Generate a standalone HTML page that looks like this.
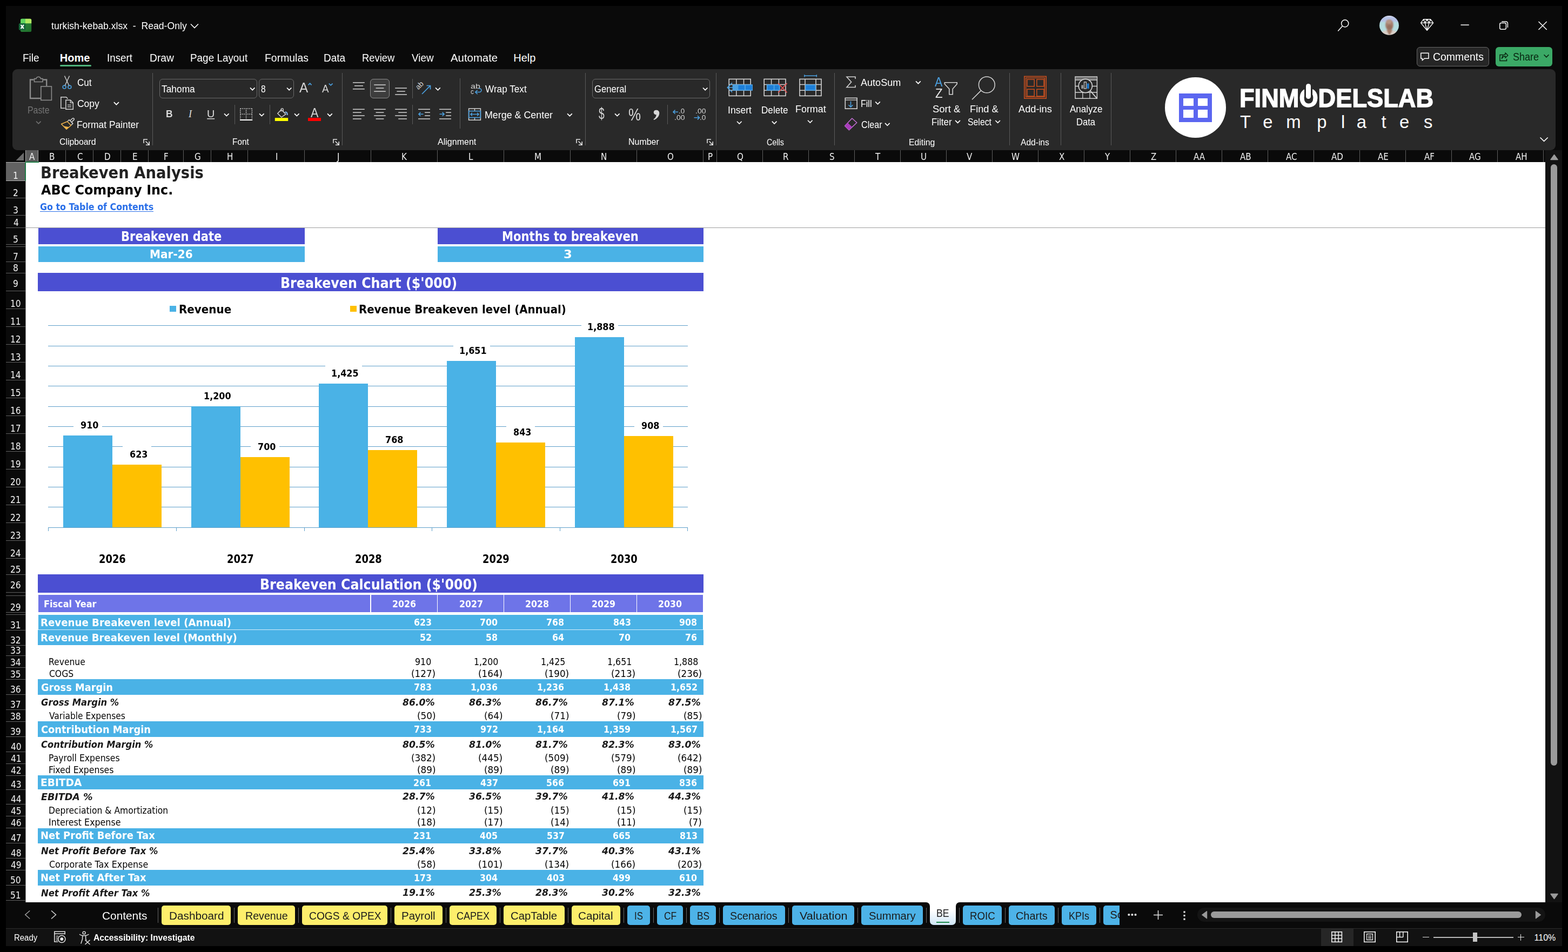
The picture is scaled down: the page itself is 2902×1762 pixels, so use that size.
<!DOCTYPE html>
<html lang="en"><head><meta charset="utf-8"><title>turkish-kebab.xlsx - Excel</title>
<style>
html,body{margin:0;padding:0;background:#000}
body{width:2902px;height:1762px;position:relative;overflow:hidden;font-family:"Liberation Sans",sans-serif}
#app div,#app span,#app svg,#app a,#app b,#app i{position:absolute;box-sizing:border-box}
#app{position:absolute;left:0;top:0;width:2902px;height:1762px;overflow:hidden}
.t{white-space:pre;transform-origin:0 0;color:#fff;text-decoration:none;font-style:normal;font-weight:400}
.f0{font:400 18px "Liberation Sans", sans-serif;line-height:1}
.f1{font:400 20px "Liberation Sans", sans-serif;line-height:1}
.f2{font:700 20px "Liberation Sans", sans-serif;line-height:1}
.f3{font:400 25.5px "Liberation Sans", sans-serif;line-height:1}
.f4{font:700 18.5px "Liberation Sans", sans-serif;line-height:1}
.f5{font:italic 400 18.5px "Liberation Serif", serif;line-height:1}
.f6{font:400 18.5px "Liberation Sans", sans-serif;line-height:1}
.f7{font:400 23px "Liberation Sans", sans-serif;line-height:1}
.f8{font:400 29.5px "Liberation Sans", sans-serif;line-height:1}
.f9{font:400 30.5px "Liberation Sans", sans-serif;line-height:1}
.f10{font:400 24px "Liberation Sans", sans-serif;line-height:1}
.f11{font:400 13.5px "Liberation Sans", sans-serif;line-height:1}
.f12{font:400 12.3px "Liberation Sans", sans-serif;line-height:1}
.f13{font:400 16.5px "Liberation Sans", sans-serif;line-height:1}
.f14{font:700 48.4px "Liberation Sans", sans-serif;line-height:1}
.f15{font:400 16.8px "DejaVu Sans", "Liberation Sans", sans-serif;line-height:1}
.f16{font:400 17.2px "DejaVu Sans", "Liberation Sans", sans-serif;line-height:1}
.f17{font:700 30.8px "DejaVu Sans", "Liberation Sans", sans-serif;line-height:1}
.f18{font:700 24.2px "DejaVu Sans", "Liberation Sans", sans-serif;line-height:1}
.f19{font:700 17.6px "DejaVu Sans", "Liberation Sans", sans-serif;line-height:1}
.f20{font:700 21px "DejaVu Sans", "Liberation Sans", sans-serif;line-height:1}
.f21{font:700 26.4px "DejaVu Sans", "Liberation Sans", sans-serif;line-height:1}
.f22{font:700 22px "DejaVu Sans", "Liberation Sans", sans-serif;line-height:1}
.f23{font:700 16.8px "DejaVu Sans", "Liberation Sans", sans-serif;line-height:1}
.f24{font:700 20.6px "DejaVu Sans", "Liberation Sans", sans-serif;line-height:1}
.f25{font:700 18px "DejaVu Sans", "Liberation Sans", sans-serif;line-height:1}
.f26{font:700 19.8px "DejaVu Sans", "Liberation Sans", sans-serif;line-height:1}
.f27{font:400 17.6px "DejaVu Sans", "Liberation Sans", sans-serif;line-height:1}
.f28{font:italic 700 17.6px "DejaVu Sans", "Liberation Sans", sans-serif;line-height:1}
.f29{font:400 16px "Liberation Sans", sans-serif;line-height:1}
.f30{font:700 16px "Liberation Sans", sans-serif;line-height:1}

</style></head><body><div id="app">
<div style="left:11px;top:11px;width:2879.5px;height:1740px;background:#0a0a0a;"></div>
<span class="t f0" style="left:95.4px;top:39px;transform:scaleX(0.979);">turkish-kebab.xlsx  -  Read-Only</span>
<span class="t f1" style="left:41.65px;top:96.8px;transform:scaleX(0.945);">File</span>
<span class="t f2" style="left:110.8px;top:96.8px;">Home</span>
<span class="t f1" style="left:198.06px;top:96.8px;transform:scaleX(0.94);">Insert</span>
<span class="t f1" style="left:276.54px;top:96.8px;transform:scaleX(0.963);">Draw</span>
<span class="t f1" style="left:352.26px;top:96.8px;transform:scaleX(0.945);">Page Layout</span>
<span class="t f1" style="left:490.23px;top:96.8px;transform:scaleX(0.971);">Formulas</span>
<span class="t f1" style="left:599.35px;top:96.8px;transform:scaleX(0.95);">Data</span>
<span class="t f1" style="left:670.28px;top:96.8px;transform:scaleX(0.921);">Review</span>
<span class="t f1" style="left:762px;top:96.8px;transform:scaleX(0.942);">View</span>
<span class="t f1" style="left:834.2px;top:96.8px;transform:scaleX(1.018);">Automate</span>
<span class="t f1" style="left:950.2px;top:96.8px;">Help</span>
<div style="left:111px;top:120px;width:58px;height:3px;background:#4fb37c;border-radius:1.5px"></div>
<div style="left:2621.5px;top:87px;width:134.5px;height:36px;background:#262626;border:1px solid #666;border-radius:6px"></div>
<span class="t f1" style="left:2652.03px;top:95.4px;transform:scaleX(0.972);">Comments</span>
<div style="left:2768px;top:87px;width:105px;height:36px;background:#3ba966;border-radius:6px"></div>
<span class="t f1" style="left:2799.8px;top:95.4px;color:#08240f;transform:scaleX(0.901);">Share</span>
<div style="left:23px;top:128px;width:2855.5px;height:149.7px;background:#292929;border-radius:9px"></div>
<div style="left:295.2px;top:146.2px;width:180.4px;height:35.5px;background:transparent;border:1px solid #6a6a6a;border-radius:6px"></div>
<div style="left:479px;top:146.2px;width:64.8px;height:35.5px;background:transparent;border:1px solid #6a6a6a;border-radius:6px"></div>
<div style="left:1096.2px;top:146.2px;width:217.6px;height:35.5px;background:transparent;border:1px solid #6a6a6a;border-radius:6px"></div>
<div style="left:685.2px;top:146.2px;width:35.8px;height:35.8px;background:#3d3d3d;border:1px solid #8c8c8c;border-radius:6px"></div>
<div style="left:282px;top:135px;width:1px;height:133.5px;background:#5a5a5a;"></div>
<div style="left:633px;top:135px;width:1px;height:133.5px;background:#5a5a5a;"></div>
<div style="left:1083px;top:135px;width:1px;height:133.5px;background:#5a5a5a;"></div>
<div style="left:1325.1px;top:135px;width:1px;height:133.5px;background:#5a5a5a;"></div>
<div style="left:1544.1px;top:135px;width:1px;height:133.5px;background:#5a5a5a;"></div>
<div style="left:1867.9px;top:135px;width:1px;height:133.5px;background:#5a5a5a;"></div>
<div style="left:1963px;top:135px;width:1px;height:133.5px;background:#5a5a5a;"></div>
<div style="left:2056.1px;top:135px;width:1px;height:133.5px;background:#5a5a5a;"></div>
<div style="left:433.9px;top:194px;width:1px;height:36px;background:#5a5a5a;"></div>
<div style="left:499.1px;top:194px;width:1px;height:36px;background:#5a5a5a;"></div>
<div style="left:762.5px;top:194px;width:1px;height:36px;background:#5a5a5a;"></div>
<div style="left:1234.9px;top:194px;width:1px;height:36px;background:#5a5a5a;"></div>
<div style="left:762.5px;top:146px;width:1px;height:36px;background:#5a5a5a;"></div>
<div style="left:850.8px;top:144.5px;width:1px;height:93px;background:#5a5a5a;"></div>
<span class="t f0" style="left:51.42px;top:195px;color:#737373;transform:scaleX(0.882);">Paste</span>
<span class="t f0" style="left:142.6px;top:143.75px;transform:scaleX(0.943);">Cut</span>
<span class="t f0" style="left:142.6px;top:182.6px;transform:scaleX(0.971);">Copy</span>
<span class="t f0" style="left:142.03px;top:221.9px;transform:scaleX(0.966);">Format Painter</span>
<span class="t f0" style="left:298.8px;top:155.6px;transform:scaleX(0.964);">Tahoma</span>
<span class="t f0" style="left:482.6px;top:155.6px;transform:scaleX(0.86);">8</span>
<span class="t f3" style="left:554.4px;top:150.2px;color:#d4d4d4;transform:scaleX(0.953);">A</span>
<span class="t f1" style="left:595.6px;top:154.2px;color:#d4d4d4;transform:scaleX(0.943);">A</span>
<span class="t f4" style="left:306.56px;top:202px;color:#dcdcdc;transform:scaleX(0.942);">B</span>
<span class="t f5" style="left:349px;top:202px;color:#dcdcdc;">I</span>
<span class="t f6" style="left:383.33px;top:202px;color:#dcdcdc;transform:scaleX(1.073);">U</span>
<span class="t f7" style="left:575px;top:198.3px;color:#d4d4d4;transform:scaleX(0.938);">A</span>
<span class="t f0" style="left:898px;top:155.6px;transform:scaleX(0.954);">Wrap Text</span>
<span class="t f0" style="left:897.01px;top:203.75px;transform:scaleX(0.992);">Merge &amp; Center</span>
<span class="t f0" style="left:1099.6px;top:155.6px;transform:scaleX(0.923);">General</span>
<span class="t f8" style="left:1108px;top:195.4px;color:#d8d8d8;transform:scaleX(0.65);">$</span>
<span class="t f9" style="left:1163.15px;top:196.7px;color:#d8d8d8;transform:scaleX(0.854);">%</span>
<span class="t f0" style="left:1346.93px;top:194.6px;transform:scaleX(0.975);">Insert</span>
<span class="t f0" style="left:1409.25px;top:194.6px;transform:scaleX(0.951);">Delete</span>
<span class="t f0" style="left:1472.01px;top:192.75px;transform:scaleX(0.995);">Format</span>
<span class="t f0" style="left:1593.2px;top:143.75px;transform:scaleX(1.003);">AutoSum</span>
<span class="t f0" style="left:1592.91px;top:182.6px;transform:scaleX(0.891);">Fill</span>
<span class="t f0" style="left:1593.5px;top:221.9px;transform:scaleX(0.895);">Clear</span>
<span class="t f0" style="left:1725.6px;top:192.75px;transform:scaleX(1.026);">Sort &amp;</span>
<span class="t f0" style="left:1724.26px;top:216.5px;transform:scaleX(0.941);">Filter</span>
<span class="t f0" style="left:1794.79px;top:192.75px;transform:scaleX(1.013);">Find &amp;</span>
<span class="t f0" style="left:1791px;top:216.5px;transform:scaleX(0.88);">Select</span>
<span class="t f0" style="left:1885.2px;top:192.75px;transform:scaleX(1.013);">Add-ins</span>
<span class="t f0" style="left:1980.3px;top:192.75px;transform:scaleX(0.946);">Analyze</span>
<span class="t f0" style="left:1992.08px;top:216.5px;transform:scaleX(0.921);">Data</span>
<span class="t f10" style="left:1730px;top:140px;color:#4ba0e0;transform:scaleX(0.9);">A</span>
<span class="t f10" style="left:1730.8px;top:161.2px;color:#e6e6e6;transform:scaleX(0.929);">Z</span>
<span class="t f11" style="left:870.8px;top:152.8px;color:#d4d4d4;transform:scaleX(1.186);">ab</span>
<span class="t f11" style="left:871px;top:163.4px;color:#d4d4d4;transform:scaleX(0.857);">c</span>
<span class="t f12" style="left:1256.22px;top:200.3px;color:#d4d4d4;transform:scaleX(1.083);">.0</span>
<span class="t f12" style="left:1247.86px;top:212.4px;color:#d4d4d4;transform:scaleX(1.138);">.00</span>
<span class="t f12" style="left:1287.16px;top:200.3px;color:#d4d4d4;transform:scaleX(1.144);">.00</span>
<span class="t f12" style="left:1295.4px;top:212.4px;color:#d4d4d4;transform:scaleX(1.104);">.0</span>
<span class="t f13" style="left:109.5px;top:253.6px;transform:scaleX(0.957);">Clipboard</span>
<span class="t f13" style="left:429.77px;top:253.9px;transform:scaleX(0.934);">Font</span>
<span class="t f13" style="left:810.2px;top:253.9px;transform:scaleX(0.972);">Alignment</span>
<span class="t f13" style="left:1162.83px;top:253.9px;transform:scaleX(0.966);">Number</span>
<span class="t f13" style="left:1418.6px;top:254.5px;transform:scaleX(0.868);">Cells</span>
<span class="t f13" style="left:1681.64px;top:254.5px;transform:scaleX(0.958);">Editing</span>
<span class="t f13" style="left:1888.6px;top:254.5px;transform:scaleX(0.944);">Add-ins</span>
<div style="left:2156px;top:142.5px;width:112.6px;height:112.5px;background:#fff;border-radius:50%"></div>
<div style="left:2182px;top:173.2px;width:61px;height:52.6px;background:#5b66f0;"></div>
<div style="left:2190px;top:181.5px;width:19px;height:14.25px;background:#fff;"></div>
<div style="left:2190px;top:203.4px;width:19px;height:14.3px;background:#fff;"></div>
<div style="left:2216.7px;top:181.5px;width:18.6px;height:14.25px;background:#fff;"></div>
<div style="left:2216.7px;top:203.4px;width:18.6px;height:14.3px;background:#fff;"></div>
<span class="t f14" style="left:2293.5px;top:156.6px;transform:scaleX(0.934);-webkit-text-stroke:1.4px #fff;">FINMODELSLAB</span>
<div style="left:2414.2px;top:156px;width:14.6px;height:27.4px;background:#292929;border-radius:7px 7px 0 0"></div>
<div style="left:2416.8px;top:155px;width:9.4px;height:27.8px;background:#fff;border-radius:4.7px"></div>
<svg style="left:2285px;top:200.72px" width="389.46" height="49.2"><text x="10 52.2 95.2 152.2 197 225.7 271.4 305.1 350.1" y="36.08" font-family='"Liberation Sans", sans-serif' font-size="32.8" font-weight="400" fill="#fff">Templates</text></svg>
<svg style="left:0;top:0" width="2902" height="300" viewBox="0 0 2902 300"><defs><linearGradient id="xg" x1="0" y1="0" x2="1" y2="1"><stop offset="0" stop-color="#2f8f3e"/><stop offset="1" stop-color="#1f6e2b"/></linearGradient><radialGradient id="av" cx="0.5" cy="0.55" r="0.6"><stop offset="0" stop-color="#c9a58f"/><stop offset="0.42" stop-color="#b9957f"/><stop offset="0.5" stop-color="#9ec3cf"/><stop offset="1" stop-color="#8fb4cc"/></radialGradient><clipPath id="avc"><circle cx="2571" cy="46.9" r="18"/></clipPath><filter id="bl" x="-20%" y="-20%" width="140%" height="140%"><feGaussianBlur stdDeviation="0.9"/></filter></defs><rect x="38" y="34.8" width="20.2" height="24.2" rx="2.5" fill="url(#xg)"/><path d="M40.5 34.8H47V43.3H38V37.3a2.5 2.5 0 0 1 2.5-2.5Z" fill="#5fd35e"/><path d="M47 34.8H55.7a2.5 2.5 0 0 1 2.5 2.5V43.3H47Z" fill="#b4e862"/><rect x="34.8" y="43" width="12.9" height="12.9" rx="2.6" fill="#17663a"/><path d="M38.6 46L43.9 53M43.9 46L38.6 53" stroke="#fff" stroke-width="2.1" fill="none"/><path d="M353 44.5L360 51.5L367 44.5" fill="none" stroke="#fff" stroke-width="1.6"/><circle cx="2489.2" cy="43.4" r="6.6" fill="none" stroke="#fff" stroke-width="1.5"/><path d="M2484.5 48.2L2476.3 57.4" stroke="#fff" stroke-width="1.5"/><g clip-path="url(#avc)"><g filter="url(#bl)"><rect x="2550" y="26" width="42" height="42" fill="#b4dcdf"/><rect x="2550" y="26" width="42" height="14.5" fill="#b6c2e6"/><rect x="2550" y="26" width="42" height="5" fill="#d9dcef"/><path d="M2553 66C2556 58 2562 56.5 2565.5 56H2577.5C2581 56.5 2586 58 2589 66Z" fill="#d9d0c9"/><path d="M2566 55.5L2571.5 66L2577.5 55.5Z" fill="#a57f6b"/><ellipse cx="2571.4" cy="46.3" rx="7.6" ry="10.6" fill="#a5806f"/><ellipse cx="2570.5" cy="40" rx="5.5" ry="4" fill="#b79786"/><ellipse cx="2572" cy="50.5" rx="5" ry="4.5" fill="#96705f"/></g></g><path d="M2634.5 35.8H2647.7L2652.6 42.4L2641.1 56.3L2629.6 42.4ZM2629.6 42.4H2652.6M2637.3 42.4L2641.1 56.3L2644.9 42.4M2634.5 35.8L2637.3 42.4L2641.1 35.8L2644.9 42.4L2647.7 35.8" fill="none" stroke="#fff" stroke-width="1.4" stroke-linejoin="round"/><path d="M2703.5 46.2H2718.8" stroke="#fff" stroke-width="1.5"/><rect x="2775.8" y="42.6" width="11.6" height="11.6" rx="2.4" fill="none" stroke="#fff" stroke-width="1.5"/><path d="M2779.2 39.9H2787.2a3.2 3.2 0 0 1 3.2 3.2V51" fill="none" stroke="#fff" stroke-width="1.5"/><path d="M2847.5 40L2862.7 55M2862.7 40L2847.5 55" stroke="#fff" stroke-width="1.5"/><path d="M2629.8 98.2H2644V108.2H2636.2L2632.3 111.8V108.2H2629.8Z" fill="none" stroke="#fff" stroke-width="1.5" stroke-linejoin="round"/><path d="M2782 101.5H2776V112.5H2788.5V109" fill="none" stroke="#08240f" stroke-width="1.5"/><path d="M2779.5 108.5C2780 103.5 2783 100.8 2786 100.8V97.8L2790.8 102.4L2786 107V104C2783.5 104 2781 105.5 2779.5 108.5Z" fill="none" stroke="#08240f" stroke-width="1.4" stroke-linejoin="round"/><path d="M2857.5 101.25L2862 105.75L2866.5 101.25" fill="none" stroke="#08240f" stroke-width="1.6"/><path d="M2850.5 254.5L2857.6 261.3L2864.7 254.5" fill="none" stroke="#fff" stroke-width="1.6"/><path d="M62.5 147.5H56V182H75" fill="none" stroke="#8c8c8c" stroke-width="2.4"/><path d="M80 147.5H86.2V159" fill="none" stroke="#8c8c8c" stroke-width="2.4"/><path d="M63.5 151.5V145.6H67A4.3 4.3 0 0 1 75.4 145.6H79V151.5Z" fill="none" stroke="#8c8c8c" stroke-width="1.6"/><rect x="75.8" y="160" width="19.6" height="25.4" fill="#292929" stroke="#8c8c8c" stroke-width="1.6"/><path d="M67 224.55L71.3 228.85L75.6 224.55" fill="none" stroke="#707070" stroke-width="1.7"/><path d="M119.5 140.5L128.3 159.5M128.5 140.5L119.7 159.5" stroke="#d4d4d4" stroke-width="1.4" fill="none"/><circle cx="119.2" cy="161" r="3" fill="none" stroke="#4ba0e0" stroke-width="1.6"/><circle cx="128.8" cy="161" r="3" fill="none" stroke="#4ba0e0" stroke-width="1.6"/><path d="M120.5 200.2H112.8V179.8H122.5L125.5 182.8" fill="none" stroke="#d4d4d4" stroke-width="1.5"/><path d="M121.8 202.3V185.3H130.5L135.3 190.2V202.3Z" fill="none" stroke="#d4d4d4" stroke-width="1.5"/><path d="M130.3 185.5V190.4H135.2" fill="none" stroke="#d4d4d4" stroke-width="1.3"/><path d="M125 194.3H132M125 197.6H132" stroke="#d4d4d4" stroke-width="1.3"/><path d="M210.8 189.1L215.4 193.7L220 189.1" fill="none" stroke="#fff" stroke-width="1.7"/><path d="M113.5 229.5L124.5 225L131.5 232L123 239.3Z" fill="none" stroke="#f0b44c" stroke-width="1.5" stroke-linejoin="round"/><path d="M117.5 233.3L127.8 235.2L123 239.3Z" fill="#f0b44c"/><path d="M125.2 224.5L128 221.8L134.8 228.6L132 231.4" fill="none" stroke="#d4d4d4" stroke-width="1.5"/><path d="M129.5 223.5L134 219.2a1.9 1.9 0 0 1 2.7 2.7L132.3 226.3" fill="none" stroke="#d4d4d4" stroke-width="1.5"/><path d="M266 265V258H273" fill="none" stroke="#e0e0e0" stroke-width="1.6"/><path d="M269.5 261.5L276 268M276.2 262V268.2H270" fill="none" stroke="#e0e0e0" stroke-width="1.6"/><path d="M463 162.47L467.25 166.72L471.5 162.47" fill="none" stroke="#fff" stroke-width="1.7"/><path d="M531 162.5L535.2 166.7L539.4 162.5" fill="none" stroke="#fff" stroke-width="1.7"/><path d="M570.6 157.3L573.6 154.3L576.6 157.3" fill="none" stroke="#4ba0e0" stroke-width="1.7"/><path d="M608.8 154.6L612.2 157.9L615.6 154.6" fill="none" stroke="#4ba0e0" stroke-width="1.7"/><path d="M383.2 219.8H397.2" stroke="#dcdcdc" stroke-width="1.5"/><path d="M415 210.35L419.3 214.65L423.6 210.35" fill="none" stroke="#fff" stroke-width="1.7"/><path d="M444.8 201H466.4M444.8 211.2H466.4M444.8 201V221M455.6 201V221M466.4 201V221" fill="none" stroke="#d4d4d4" stroke-width="1.6" stroke-dasharray="1.6 1.7"/><path d="M444 222H467.2" stroke="#fff" stroke-width="2"/><path d="M480 210.35L484.3 214.65L488.6 210.35" fill="none" stroke="#fff" stroke-width="1.7"/><path d="M520.5 203L528.8 211.3L521 217L513.8 210Z" fill="none" stroke="#d4d4d4" stroke-width="1.5" stroke-linejoin="round"/><path d="M520.2 206.5V202.6a2 2 0 0 1 4 0V206" fill="none" stroke="#d4d4d4" stroke-width="1.4"/><path d="M527 208C530 206.5 531.8 208.5 531.8 213" fill="none" stroke="#7fb2e6" stroke-width="2.2"/><rect x="508.8" y="218.2" width="24.4" height="5.8" fill="#ffff00"/><path d="M545 210.35L549.3 214.65L553.6 210.35" fill="none" stroke="#fff" stroke-width="1.7"/><rect x="570" y="218.2" width="24" height="5.8" fill="#ff0000"/><path d="M606 210.3L610.4 214.7L614.8 210.3" fill="none" stroke="#fff" stroke-width="1.7"/><path d="M617 265V258H624" fill="none" stroke="#e0e0e0" stroke-width="1.6"/><path d="M620.5 261.5L627 268M627.2 262V268.2H621" fill="none" stroke="#e0e0e0" stroke-width="1.6"/><path d="M653 152.9H674.8" stroke="#d4d4d4" stroke-width="1.5"/><path d="M656 158.8H672" stroke="#d4d4d4" stroke-width="1.5"/><path d="M653 164.7H674.8" stroke="#d4d4d4" stroke-width="1.5"/><path d="M692.2 157.1H713.8" stroke="#d4d4d4" stroke-width="1.5"/><path d="M695.6 163.1H710.4" stroke="#d4d4d4" stroke-width="1.5"/><path d="M692.2 169.1H713.8" stroke="#d4d4d4" stroke-width="1.5"/><path d="M731.2 163.1H753" stroke="#d4d4d4" stroke-width="1.5"/><path d="M734.4 169.1H749.8" stroke="#d4d4d4" stroke-width="1.5"/><path d="M731.2 175H753" stroke="#d4d4d4" stroke-width="1.5"/><path d="M653 202.3H674.8" stroke="#d4d4d4" stroke-width="1.5"/><path d="M653 208.2H668.8" stroke="#d4d4d4" stroke-width="1.5"/><path d="M653 214.1H674.8" stroke="#d4d4d4" stroke-width="1.5"/><path d="M653 220H668.8" stroke="#d4d4d4" stroke-width="1.5"/><path d="M692.2 202.3H713.8" stroke="#d4d4d4" stroke-width="1.5"/><path d="M695.6 208.2H710.4" stroke="#d4d4d4" stroke-width="1.5"/><path d="M692.2 214.1H713.8" stroke="#d4d4d4" stroke-width="1.5"/><path d="M695.6 220H710.4" stroke="#d4d4d4" stroke-width="1.5"/><path d="M731.2 202.3H753" stroke="#d4d4d4" stroke-width="1.5"/><path d="M737.2 208.2H753" stroke="#d4d4d4" stroke-width="1.5"/><path d="M731.2 214.1H753" stroke="#d4d4d4" stroke-width="1.5"/><path d="M737.2 220H753" stroke="#d4d4d4" stroke-width="1.5"/><path d="M774 202.3H796" stroke="#d4d4d4" stroke-width="1.5"/><path d="M786.2 208.2H796" stroke="#d4d4d4" stroke-width="1.5"/><path d="M786.2 214.1H796" stroke="#d4d4d4" stroke-width="1.5"/><path d="M774 220H796" stroke="#d4d4d4" stroke-width="1.5"/><path d="M783.5 211.2H775M778.4 207.7L774.9 211.2L778.4 214.7" fill="none" stroke="#4ba0e0" stroke-width="1.6"/><path d="M813 202.3H835" stroke="#d4d4d4" stroke-width="1.5"/><path d="M825.2 208.2H835" stroke="#d4d4d4" stroke-width="1.5"/><path d="M825.2 214.1H835" stroke="#d4d4d4" stroke-width="1.5"/><path d="M813 220H835" stroke="#d4d4d4" stroke-width="1.5"/><path d="M813.5 211.2H822M818.6 207.7L822.1 211.2L818.6 214.7" fill="none" stroke="#4ba0e0" stroke-width="1.6"/><path d="M781 174L796.3 158.7M789.5 158.5H796.5V165.5" fill="none" stroke="#4ba0e0" stroke-width="1.7"/><text x="774.2" y="166.6" font-family="Liberation Sans, sans-serif" font-size="13.5" fill="#d4d4d4" transform="rotate(-45 774.2 166.6)">ab</text><path d="M806 162.4L810.4 166.8L814.8 162.4" fill="none" stroke="#fff" stroke-width="1.7"/><path d="M880 170.5H887.5a3.4 3.4 0 0 0 0-6.8H886M883.7 166.7L879.8 170.5L883.7 174.3" fill="none" stroke="#4ba0e0" stroke-width="1.6"/><rect x="867.6" y="201" width="21.8" height="21.2" fill="none" stroke="#d4d4d4" stroke-width="1.5"/><path d="M878.5 201V205.6M878.5 217.5V222.2" stroke="#d4d4d4" stroke-width="1.4"/><rect x="867.6" y="205.6" width="21.8" height="12" fill="none" stroke="#4ba0e0" stroke-width="1.6"/><path d="M871 211.6H886M873.8 208.8L871 211.6L873.8 214.4M883.2 208.8L886 211.6L883.2 214.4" fill="none" stroke="#4ba0e0" stroke-width="1.5"/><path d="M1050 210.3L1054.4 214.7L1058.8 210.3" fill="none" stroke="#fff" stroke-width="1.7"/><path d="M1067 265V258H1074" fill="none" stroke="#e0e0e0" stroke-width="1.6"/><path d="M1070.5 261.5L1077 268M1077.2 262V268.2H1071" fill="none" stroke="#e0e0e0" stroke-width="1.6"/><path d="M1301 162.5L1305.2 166.7L1309.4 162.5" fill="none" stroke="#fff" stroke-width="1.7"/><path d="M1138 210.35L1142.3 214.65L1146.6 210.35" fill="none" stroke="#fff" stroke-width="1.7"/><path d="M1214.5 203.8a4.2 4.2 0 1 0 0.2 8.3C1214.5 216 1212.8 218.8 1209.5 220.5L1210.3 221.9C1216.5 219.5 1220.3 214.5 1220.3 209.2C1220.3 205.8 1217.8 203.8 1214.5 203.8Z" fill="#d8d8d8"/><path d="M1255 207.2H1246M1249.6 203.6L1246 207.2L1249.6 210.8" fill="none" stroke="#4ba0e0" stroke-width="1.6"/><path d="M1284.5 217.8H1294.5M1290.9 214.2L1294.5 217.8L1290.9 221.4" fill="none" stroke="#4ba0e0" stroke-width="1.6"/><path d="M1309 265V258H1316" fill="none" stroke="#e0e0e0" stroke-width="1.6"/><path d="M1312.5 261.5L1319 268M1319.2 262V268.2H1313" fill="none" stroke="#e0e0e0" stroke-width="1.6"/><rect x="1349.2" y="146.4" width="40" height="31" fill="none" stroke="#d4d4d4" stroke-width="1.6"/><path d="M1362.8 146.4V177.4M1376.5 146.4V177.4M1349.2 156.6H1389.2M1349.2 167.3H1389.2" stroke="#d4d4d4" stroke-width="1.5" fill="none"/><rect x="1355.6" y="156.2" width="37.4" height="11.6" fill="#4ba0e0"/><rect x="1366.4" y="157.8" width="11.6" height="8.4" fill="#1e7fd8"/><rect x="1380" y="157.8" width="12" height="8.4" fill="#1e7fd8"/><path d="M1355 153.3L1346.3 162L1355 170.7M1346.6 162H1365" fill="none" stroke="#4ba0e0" stroke-width="1.7"/><rect x="1414.2" y="146.4" width="39.8" height="31" fill="none" stroke="#d4d4d4" stroke-width="1.6"/><path d="M1427.6 146.4V177.4M1441.4 146.4V177.4M1414.2 156.6H1454M1414.2 167.3H1454" stroke="#d4d4d4" stroke-width="1.5" fill="none"/><rect x="1418.8" y="156.2" width="25" height="11.6" fill="#4ba0e0"/><rect x="1420.6" y="157.8" width="11" height="8.4" fill="#1e7fd8"/><rect x="1433.6" y="157.8" width="8" height="8.4" fill="#1e7fd8"/><path d="M1440.2 154.2L1456.6 171.4M1456.6 154.2L1440.2 171.4" stroke="#e35353" stroke-width="1.7"/><rect x="1480" y="146.4" width="40" height="31" fill="none" stroke="#d4d4d4" stroke-width="1.6"/><path d="M1490 146.4V177.4M1510 146.4V177.4M1480 156.6H1520M1480 167.3H1520" stroke="#d4d4d4" stroke-width="1.5" fill="none"/><rect x="1490" y="156.2" width="20" height="11.6" fill="#4ba0e0"/><rect x="1491.7" y="157.8" width="16.6" height="8.4" fill="#1e7fd8"/><path d="M1488.6 140.3H1511.6M1488.9 138.2V142.5M1511.3 138.2V142.5" stroke="#4ba0e0" stroke-width="1.5"/><path d="M1364 224.75L1368.3 229.05L1372.6 224.75" fill="none" stroke="#fff" stroke-width="1.7"/><path d="M1428.8 224.72L1433.15 229.08L1437.5 224.72" fill="none" stroke="#fff" stroke-width="1.7"/><path d="M1495 222.75L1499.3 227.05L1503.6 222.75" fill="none" stroke="#fff" stroke-width="1.7"/><path d="M1583 146V142.2H1567L1575.6 151.8L1567 161.5H1583V157.7" fill="none" stroke="#d4d4d4" stroke-width="1.6"/><path d="M1695 150.3L1699.4 154.7L1703.8 150.3" fill="none" stroke="#fff" stroke-width="1.7"/><rect x="1564.3" y="181.4" width="21.8" height="19.8" fill="none" stroke="#d4d4d4" stroke-width="1.6"/><path d="M1564.3 185H1586" stroke="#d4d4d4" stroke-width="1.3"/><path d="M1574.5 187.5V198M1570.5 194.2L1574.5 198.2L1578.5 194.2" fill="none" stroke="#4ba0e0" stroke-width="1.6"/><path d="M1620.2 188.45L1624.5 192.75L1628.8 188.45" fill="none" stroke="#fff" stroke-width="1.7"/><path d="M1563.6 233L1576.9 219L1585.8 227L1571.4 240.6Z" fill="none" stroke="#c670d6" stroke-width="1.5" stroke-linejoin="round"/><path d="M1563.6 233L1569 227.3L1577.2 235.1L1571.4 240.6Z" fill="#a93cbc"/><path d="M1638 227.95L1642.3 232.25L1646.6 227.95" fill="none" stroke="#fff" stroke-width="1.7"/><path d="M1748.3 152.8H1771.2V155.5L1763.2 164.5V174.8H1756.8V164.5L1748.3 155.5Z" fill="none" stroke="#d4d4d4" stroke-width="1.6" stroke-linejoin="miter"/><path d="M1768 222.95L1772.5 227.45L1777 222.95" fill="none" stroke="#fff" stroke-width="1.7"/><circle cx="1826.3" cy="156.9" r="14.9" fill="none" stroke="#d4d4d4" stroke-width="1.5"/><path d="M1815.6 167.6L1799 184.3" stroke="#d4d4d4" stroke-width="1.6"/><path d="M1842.3 223.02L1846.65 227.38L1851 223.02" fill="none" stroke="#fff" stroke-width="1.7"/><rect x="1895.8" y="141.4" width="40.4" height="40.8" fill="none" stroke="#c9501f" stroke-width="1.6"/><rect x="1898.6" y="144.2" width="34.8" height="35.2" fill="none" stroke="#c9501f" stroke-width="1.4"/><rect x="1901" y="147" width="13.2" height="12.8" fill="none" stroke="#c9501f" stroke-width="1.5"/><rect x="1901" y="165.2" width="13.2" height="12.8" fill="none" stroke="#c9501f" stroke-width="1.5"/><rect x="1918.8" y="147" width="13.2" height="12.8" fill="none" stroke="#c9501f" stroke-width="1.5"/><rect x="1918.8" y="165.2" width="13.2" height="12.8" fill="none" stroke="#c9501f" stroke-width="1.5"/><rect x="1990" y="142" width="40.4" height="40.2" fill="none" stroke="#d4d4d4" stroke-width="1.5"/><rect x="1990.8" y="143" width="38.8" height="4" fill="#6e6e6e"/><path d="M1990 148H2030.4M1990 159.5H2030.4M1990 171H2030.4M2003.8 171V182M2017 171V182" stroke="#d4d4d4" stroke-width="1.3" fill="none"/><circle cx="2008.8" cy="159" r="12.6" fill="#292929" stroke="#d4d4d4" stroke-width="1.6"/><rect x="2001.3" y="157.5" width="3.6" height="6.5" fill="#9a9a9a"/><rect x="2006.5" y="151.8" width="3.8" height="12.2" fill="none" stroke="#d4d4d4" stroke-width="1.2"/><rect x="2011.8" y="154.5" width="3.6" height="9.5" fill="#1e7fd8"/><path d="M2017.8 168L2030 181.8" stroke="#d4d4d4" stroke-width="1.8"/></svg>
<div style="left:47px;top:300px;width:2813px;height:1370px;background:#fff;"></div>
<div style="left:11px;top:278px;width:2849px;height:22px;background:#0a0a0a;"></div>
<svg style="left:28px;top:282px;" width="17" height="16" viewBox="0 0 17 16"><path d="M16 0.5V15H1.5Z" fill="#6b6b6b"/></svg>
<div style="left:47px;top:278px;width:24px;height:22px;background:#5c5c5c;border-left:1px solid #a8a8a8;border-right:1px solid #a8a8a8"></div>
<div style="left:121px;top:278px;width:1px;height:22px;background:#5e5e5e;"></div>
<div style="left:172px;top:278px;width:1px;height:22px;background:#5e5e5e;"></div>
<div style="left:223px;top:278px;width:1px;height:22px;background:#5e5e5e;"></div>
<div style="left:274px;top:278px;width:1px;height:22px;background:#5e5e5e;"></div>
<div style="left:339px;top:278px;width:1px;height:22px;background:#5e5e5e;"></div>
<div style="left:390px;top:278px;width:1px;height:22px;background:#5e5e5e;"></div>
<div style="left:458px;top:278px;width:1px;height:22px;background:#5e5e5e;"></div>
<div style="left:563px;top:278px;width:1px;height:22px;background:#5e5e5e;"></div>
<div style="left:686px;top:278px;width:1px;height:22px;background:#5e5e5e;"></div>
<div style="left:809px;top:278px;width:1px;height:22px;background:#5e5e5e;"></div>
<div style="left:932px;top:278px;width:1px;height:22px;background:#5e5e5e;"></div>
<div style="left:1055px;top:278px;width:1px;height:22px;background:#5e5e5e;"></div>
<div style="left:1178px;top:278px;width:1px;height:22px;background:#5e5e5e;"></div>
<div style="left:1301px;top:278px;width:1px;height:22px;background:#5e5e5e;"></div>
<div style="left:1326px;top:278px;width:1px;height:22px;background:#5e5e5e;"></div>
<div style="left:1411px;top:278px;width:1px;height:22px;background:#5e5e5e;"></div>
<div style="left:1496px;top:278px;width:1px;height:22px;background:#5e5e5e;"></div>
<div style="left:1581px;top:278px;width:1px;height:22px;background:#5e5e5e;"></div>
<div style="left:1666px;top:278px;width:1px;height:22px;background:#5e5e5e;"></div>
<div style="left:1751px;top:278px;width:1px;height:22px;background:#5e5e5e;"></div>
<div style="left:1836px;top:278px;width:1px;height:22px;background:#5e5e5e;"></div>
<div style="left:1921px;top:278px;width:1px;height:22px;background:#5e5e5e;"></div>
<div style="left:2006px;top:278px;width:1px;height:22px;background:#5e5e5e;"></div>
<div style="left:2091px;top:278px;width:1px;height:22px;background:#5e5e5e;"></div>
<div style="left:2176px;top:278px;width:1px;height:22px;background:#5e5e5e;"></div>
<div style="left:2261px;top:278px;width:1px;height:22px;background:#5e5e5e;"></div>
<div style="left:2346px;top:278px;width:1px;height:22px;background:#5e5e5e;"></div>
<div style="left:2431px;top:278px;width:1px;height:22px;background:#5e5e5e;"></div>
<div style="left:2516px;top:278px;width:1px;height:22px;background:#5e5e5e;"></div>
<div style="left:2601px;top:278px;width:1px;height:22px;background:#5e5e5e;"></div>
<div style="left:2686px;top:278px;width:1px;height:22px;background:#5e5e5e;"></div>
<div style="left:2771px;top:278px;width:1px;height:22px;background:#5e5e5e;"></div>
<div style="left:2856px;top:278px;width:1px;height:22px;background:#5e5e5e;"></div>
<span class="t f15" style="left:54.4px;top:281.75px;color:#f2f2f2;transform:scaleX(0.9);">A</span>
<span class="t f15" style="left:91.4px;top:281.75px;color:#f2f2f2;transform:scaleX(0.9);">B</span>
<span class="t f15" style="left:142.85px;top:281.75px;color:#f2f2f2;transform:scaleX(0.9);">C</span>
<span class="t f15" style="left:192.95px;top:281.75px;color:#f2f2f2;transform:scaleX(0.9);">D</span>
<span class="t f15" style="left:244.85px;top:281.75px;color:#f2f2f2;transform:scaleX(0.9);">E</span>
<span class="t f15" style="left:303.3px;top:281.75px;color:#f2f2f2;transform:scaleX(0.9);">F</span>
<span class="t f15" style="left:360.4px;top:281.75px;color:#f2f2f2;transform:scaleX(0.9);">G</span>
<span class="t f15" style="left:419.9px;top:281.75px;color:#f2f2f2;transform:scaleX(0.9);">H</span>
<span class="t f15" style="left:509.55px;top:281.75px;color:#f2f2f2;transform:scaleX(0.9);">I</span>
<span class="t f15" style="left:624.45px;top:281.75px;color:#f2f2f2;transform:scaleX(0.9);">J</span>
<span class="t f15" style="left:742.95px;top:281.75px;color:#f2f2f2;transform:scaleX(0.9);">K</span>
<span class="t f15" style="left:866.85px;top:281.75px;color:#f2f2f2;transform:scaleX(0.9);">L</span>
<span class="t f15" style="left:988.5px;top:281.75px;color:#f2f2f2;transform:scaleX(0.9);">M</span>
<span class="t f15" style="left:1112.4px;top:281.75px;color:#f2f2f2;transform:scaleX(0.9);">N</span>
<span class="t f15" style="left:1234.95px;top:281.75px;color:#f2f2f2;transform:scaleX(0.9);">O</span>
<span class="t f15" style="left:1309.85px;top:281.75px;color:#f2f2f2;transform:scaleX(0.9);">P</span>
<span class="t f15" style="left:1363.95px;top:281.75px;color:#f2f2f2;transform:scaleX(0.9);">Q</span>
<span class="t f15" style="left:1448.95px;top:281.75px;color:#f2f2f2;transform:scaleX(0.9);">R</span>
<span class="t f15" style="left:1534.85px;top:281.75px;color:#f2f2f2;transform:scaleX(0.9);">S</span>
<span class="t f15" style="left:1620.3px;top:281.75px;color:#f2f2f2;transform:scaleX(0.9);">T</span>
<span class="t f15" style="left:1704.4px;top:281.75px;color:#f2f2f2;transform:scaleX(0.9);">U</span>
<span class="t f15" style="left:1789.4px;top:281.75px;color:#f2f2f2;transform:scaleX(0.9);">V</span>
<span class="t f15" style="left:1872.15px;top:281.75px;color:#f2f2f2;transform:scaleX(0.9);">W</span>
<span class="t f15" style="left:1959.85px;top:281.75px;color:#f2f2f2;transform:scaleX(0.9);">X</span>
<span class="t f15" style="left:2045.3px;top:281.75px;color:#f2f2f2;transform:scaleX(0.9);">Y</span>
<span class="t f15" style="left:2129.85px;top:281.75px;color:#f2f2f2;transform:scaleX(0.9);">Z</span>
<span class="t f15" style="left:2209.02px;top:281.75px;color:#f2f2f2;transform:scaleX(0.9);">AA</span>
<span class="t f15" style="left:2294.68px;top:281.75px;color:#f2f2f2;transform:scaleX(0.9);">AB</span>
<span class="t f15" style="left:2379.82px;top:281.75px;color:#f2f2f2;transform:scaleX(0.9);">AC</span>
<span class="t f15" style="left:2464.23px;top:281.75px;color:#f2f2f2;transform:scaleX(0.9);">AD</span>
<span class="t f15" style="left:2550.13px;top:281.75px;color:#f2f2f2;transform:scaleX(0.9);">AE</span>
<span class="t f15" style="left:2635.58px;top:281.75px;color:#f2f2f2;transform:scaleX(0.9);">AF</span>
<span class="t f15" style="left:2719.37px;top:281.75px;color:#f2f2f2;transform:scaleX(0.9);">AG</span>
<span class="t f15" style="left:2804.68px;top:281.75px;color:#f2f2f2;transform:scaleX(0.9);">AH</span>
<div style="left:47px;top:299px;width:25px;height:2px;background:#1f7a45;"></div>
<div style="left:11px;top:300px;width:36px;height:1370px;background:#0a0a0a;"></div>
<div style="left:47px;top:300px;width:1px;height:1370px;background:#8e8e8e;"></div>
<div style="left:11px;top:300px;width:37px;height:35px;background:#626262;border-right:2px solid #1f7a45;border-top:1px solid #b0b0b0;border-bottom:1px solid #b0b0b0"></div>
<span class="t f16" style="left:24.35px;top:316.8px;color:#f2f2f2;transform:scaleX(0.9);">1</span>
<div style="left:11px;top:365.5px;width:36px;height:1px;background:#5e5e5e;"></div>
<span class="t f16" style="left:24.35px;top:348.6px;color:#f2f2f2;transform:scaleX(0.9);">2</span>
<div style="left:11px;top:397.5px;width:36px;height:1px;background:#5e5e5e;"></div>
<span class="t f16" style="left:24.35px;top:380.6px;color:#f2f2f2;transform:scaleX(0.9);">3</span>
<div style="left:11px;top:420.5px;width:36px;height:1px;background:#5e5e5e;"></div>
<span class="t f16" style="left:24.8px;top:403.6px;color:#f2f2f2;transform:scaleX(0.9);">4</span>
<div style="left:11px;top:451.5px;width:36px;height:1px;background:#5e5e5e;"></div>
<span class="t f16" style="left:24.35px;top:434.6px;color:#f2f2f2;transform:scaleX(0.9);">5</span>
<div style="left:11px;top:484px;width:36px;height:1px;background:#5e5e5e;"></div>
<div style="left:11px;top:455.5px;width:36px;height:1px;background:#5e5e5e;"></div>
<span class="t f16" style="left:24.35px;top:466.6px;color:#f2f2f2;transform:scaleX(0.9);">7</span>
<div style="left:11px;top:505px;width:36px;height:1px;background:#5e5e5e;"></div>
<span class="t f16" style="left:24.35px;top:488.1px;color:#f2f2f2;transform:scaleX(0.9);">8</span>
<div style="left:11px;top:538.25px;width:36px;height:1px;background:#5e5e5e;"></div>
<span class="t f16" style="left:24.35px;top:517.3px;color:#f2f2f2;transform:scaleX(0.9);">9</span>
<div style="left:11px;top:571.22px;width:36px;height:1px;background:#5e5e5e;"></div>
<span class="t f16" style="left:19.43px;top:554.32px;color:#f2f2f2;transform:scaleX(0.9);">10</span>
<div style="left:11px;top:604.19px;width:36px;height:1px;background:#5e5e5e;"></div>
<span class="t f16" style="left:19.43px;top:587.29px;color:#f2f2f2;transform:scaleX(0.9);">11</span>
<div style="left:11px;top:637.16px;width:36px;height:1px;background:#5e5e5e;"></div>
<span class="t f16" style="left:19.43px;top:620.26px;color:#f2f2f2;transform:scaleX(0.9);">12</span>
<div style="left:11px;top:670.13px;width:36px;height:1px;background:#5e5e5e;"></div>
<span class="t f16" style="left:19.43px;top:653.23px;color:#f2f2f2;transform:scaleX(0.9);">13</span>
<div style="left:11px;top:703.1px;width:36px;height:1px;background:#5e5e5e;"></div>
<span class="t f16" style="left:19.43px;top:686.2px;color:#f2f2f2;transform:scaleX(0.9);">14</span>
<div style="left:11px;top:736.07px;width:36px;height:1px;background:#5e5e5e;"></div>
<span class="t f16" style="left:19.43px;top:719.17px;color:#f2f2f2;transform:scaleX(0.9);">15</span>
<div style="left:11px;top:769.04px;width:36px;height:1px;background:#5e5e5e;"></div>
<span class="t f16" style="left:19.43px;top:752.14px;color:#f2f2f2;transform:scaleX(0.9);">16</span>
<div style="left:11px;top:802.01px;width:36px;height:1px;background:#5e5e5e;"></div>
<span class="t f16" style="left:19.43px;top:785.11px;color:#f2f2f2;transform:scaleX(0.9);">17</span>
<div style="left:11px;top:834.98px;width:36px;height:1px;background:#5e5e5e;"></div>
<span class="t f16" style="left:19.43px;top:818.08px;color:#f2f2f2;transform:scaleX(0.9);">18</span>
<div style="left:11px;top:867.95px;width:36px;height:1px;background:#5e5e5e;"></div>
<span class="t f16" style="left:19.43px;top:851.05px;color:#f2f2f2;transform:scaleX(0.9);">19</span>
<div style="left:11px;top:900.92px;width:36px;height:1px;background:#5e5e5e;"></div>
<span class="t f16" style="left:19.43px;top:884.02px;color:#f2f2f2;transform:scaleX(0.9);">20</span>
<div style="left:11px;top:933.89px;width:36px;height:1px;background:#5e5e5e;"></div>
<span class="t f16" style="left:19.43px;top:916.99px;color:#f2f2f2;transform:scaleX(0.9);">21</span>
<div style="left:11px;top:966.86px;width:36px;height:1px;background:#5e5e5e;"></div>
<span class="t f16" style="left:19.43px;top:949.96px;color:#f2f2f2;transform:scaleX(0.9);">22</span>
<div style="left:11px;top:999.83px;width:36px;height:1px;background:#5e5e5e;"></div>
<span class="t f16" style="left:19.43px;top:982.93px;color:#f2f2f2;transform:scaleX(0.9);">23</span>
<div style="left:11px;top:1032.8px;width:36px;height:1px;background:#5e5e5e;"></div>
<span class="t f16" style="left:19.43px;top:1015.9px;color:#f2f2f2;transform:scaleX(0.9);">24</span>
<div style="left:11px;top:1063px;width:36px;height:1px;background:#5e5e5e;"></div>
<span class="t f16" style="left:19.43px;top:1046.1px;color:#f2f2f2;transform:scaleX(0.9);">25</span>
<div style="left:11px;top:1096.3px;width:36px;height:1px;background:#5e5e5e;"></div>
<span class="t f16" style="left:19.43px;top:1075.4px;color:#f2f2f2;transform:scaleX(0.9);">26</span>
<div style="left:11px;top:1132.7px;width:36px;height:1px;background:#5e5e5e;"></div>
<div style="left:11px;top:1101.5px;width:36px;height:1px;background:#5e5e5e;"></div>
<span class="t f16" style="left:19.43px;top:1115.8px;color:#f2f2f2;transform:scaleX(0.9);">29</span>
<div style="left:11px;top:1165.5px;width:36px;height:1px;background:#5e5e5e;"></div>
<div style="left:11px;top:1136.7px;width:36px;height:1px;background:#5e5e5e;"></div>
<span class="t f16" style="left:19.43px;top:1148.6px;color:#f2f2f2;transform:scaleX(0.9);">31</span>
<div style="left:11px;top:1193.5px;width:36px;height:1px;background:#5e5e5e;"></div>
<span class="t f16" style="left:19.43px;top:1176.6px;color:#f2f2f2;transform:scaleX(0.9);">32</span>
<div style="left:11px;top:1212.5px;width:36px;height:1px;background:#5e5e5e;"></div>
<span class="t f16" style="left:19.43px;top:1195.6px;color:#f2f2f2;transform:scaleX(0.9);">33</span>
<div style="left:11px;top:1234.5px;width:36px;height:1px;background:#5e5e5e;"></div>
<span class="t f16" style="left:19.43px;top:1217.6px;color:#f2f2f2;transform:scaleX(0.9);">34</span>
<div style="left:11px;top:1256.5px;width:36px;height:1px;background:#5e5e5e;"></div>
<span class="t f16" style="left:19.43px;top:1239.6px;color:#f2f2f2;transform:scaleX(0.9);">35</span>
<div style="left:11px;top:1285px;width:36px;height:1px;background:#5e5e5e;"></div>
<span class="t f16" style="left:19.43px;top:1268.1px;color:#f2f2f2;transform:scaleX(0.9);">36</span>
<div style="left:11px;top:1312.5px;width:36px;height:1px;background:#5e5e5e;"></div>
<span class="t f16" style="left:19.43px;top:1295.6px;color:#f2f2f2;transform:scaleX(0.9);">37</span>
<div style="left:11px;top:1334.5px;width:36px;height:1px;background:#5e5e5e;"></div>
<span class="t f16" style="left:19.43px;top:1317.6px;color:#f2f2f2;transform:scaleX(0.9);">38</span>
<div style="left:11px;top:1363.25px;width:36px;height:1px;background:#5e5e5e;"></div>
<span class="t f16" style="left:19.43px;top:1346.35px;color:#f2f2f2;transform:scaleX(0.9);">39</span>
<div style="left:11px;top:1390.75px;width:36px;height:1px;background:#5e5e5e;"></div>
<span class="t f16" style="left:19.88px;top:1373.85px;color:#f2f2f2;transform:scaleX(0.9);">40</span>
<div style="left:11px;top:1412.5px;width:36px;height:1px;background:#5e5e5e;"></div>
<span class="t f16" style="left:19.88px;top:1395.6px;color:#f2f2f2;transform:scaleX(0.9);">41</span>
<div style="left:11px;top:1434.5px;width:36px;height:1px;background:#5e5e5e;"></div>
<span class="t f16" style="left:19.88px;top:1417.6px;color:#f2f2f2;transform:scaleX(0.9);">42</span>
<div style="left:11px;top:1460.5px;width:36px;height:1px;background:#5e5e5e;"></div>
<span class="t f16" style="left:19.88px;top:1443.6px;color:#f2f2f2;transform:scaleX(0.9);">43</span>
<div style="left:11px;top:1488px;width:36px;height:1px;background:#5e5e5e;"></div>
<span class="t f16" style="left:19.88px;top:1471.1px;color:#f2f2f2;transform:scaleX(0.9);">44</span>
<div style="left:11px;top:1510px;width:36px;height:1px;background:#5e5e5e;"></div>
<span class="t f16" style="left:19.88px;top:1493.1px;color:#f2f2f2;transform:scaleX(0.9);">45</span>
<div style="left:11px;top:1532px;width:36px;height:1px;background:#5e5e5e;"></div>
<span class="t f16" style="left:19.88px;top:1515.1px;color:#f2f2f2;transform:scaleX(0.9);">46</span>
<div style="left:11px;top:1560px;width:36px;height:1px;background:#5e5e5e;"></div>
<span class="t f16" style="left:19.88px;top:1543.1px;color:#f2f2f2;transform:scaleX(0.9);">47</span>
<div style="left:11px;top:1587.5px;width:36px;height:1px;background:#5e5e5e;"></div>
<span class="t f16" style="left:19.88px;top:1570.6px;color:#f2f2f2;transform:scaleX(0.9);">48</span>
<div style="left:11px;top:1609.5px;width:36px;height:1px;background:#5e5e5e;"></div>
<span class="t f16" style="left:19.88px;top:1592.6px;color:#f2f2f2;transform:scaleX(0.9);">49</span>
<div style="left:11px;top:1638px;width:36px;height:1px;background:#5e5e5e;"></div>
<span class="t f16" style="left:19.43px;top:1621.1px;color:#f2f2f2;transform:scaleX(0.9);">50</span>
<div style="left:11px;top:1665.5px;width:36px;height:1px;background:#5e5e5e;"></div>
<span class="t f16" style="left:19.43px;top:1648.6px;color:#f2f2f2;transform:scaleX(0.9);">51</span>
<div style="left:47px;top:420.6px;width:2813px;height:1.1px;background:#9c9c9c;"></div>
<span class="t f17" style="left:75.22px;top:303.6px;color:#222;transform:scaleX(0.891);">Breakeven Analysis</span>
<span class="t f18" style="left:76px;top:340px;color:#000;transform:scaleX(0.986);">ABC Company Inc.</span>
<a class="t f19" style="left:74.3px;top:374.75px;color:#2a6fe8;transform:scaleX(0.903);">Go to Table of Contents</a>
<div style="left:74.3px;top:390.6px;width:209.7px;height:1.7px;background:#2a6fe8;"></div>
<div style="left:71px;top:422px;width:493px;height:30px;background:#4b4fd2;"></div>
<span class="t f18" style="left:224.01px;top:426px;transform:scaleX(0.869);">Breakeven date</span>
<div style="left:71px;top:456px;width:493px;height:28.5px;background:#4ab2e6;"></div>
<span class="t f20" style="left:277.29px;top:460.5px;transform:scaleX(0.957);">Mar-26</span>
<div style="left:810px;top:422px;width:492px;height:30px;background:#4b4fd2;"></div>
<span class="t f18" style="left:928.75px;top:426px;transform:scaleX(0.874);">Months to breakeven</span>
<div style="left:810px;top:456px;width:492px;height:28.5px;background:#4ab2e6;"></div>
<span class="t f20" style="left:1043.42px;top:460.5px;transform:scaleX(1.083);">3</span>
<div style="left:70px;top:505px;width:1232px;height:34px;background:#4b4fd2;"></div>
<span class="t f21" style="left:519.2px;top:510.5px;transform:scaleX(0.901);">Breakeven Chart ($&#x27;000)</span>
<div style="left:89px;top:938px;width:1184px;height:1px;background:#5e9fca;"></div>
<div style="left:89px;top:901px;width:1184px;height:1px;background:#5e9fca;"></div>
<div style="left:89px;top:864px;width:1184px;height:1px;background:#5e9fca;"></div>
<div style="left:89px;top:826px;width:1184px;height:1px;background:#5e9fca;"></div>
<div style="left:89px;top:789px;width:1184px;height:1px;background:#5e9fca;"></div>
<div style="left:89px;top:752px;width:1184px;height:1px;background:#5e9fca;"></div>
<div style="left:89px;top:714px;width:1184px;height:1px;background:#5e9fca;"></div>
<div style="left:89px;top:677px;width:1184px;height:1px;background:#5e9fca;"></div>
<div style="left:89px;top:640px;width:1184px;height:1px;background:#5e9fca;"></div>
<div style="left:89px;top:602px;width:1184px;height:1px;background:#5e9fca;"></div>
<div style="left:314.25px;top:565.5px;width:11.5px;height:11.5px;background:#4ab2e6;"></div>
<span class="t f22" style="left:330.69px;top:562.4px;color:#000;transform:scaleX(0.905);">Revenue</span>
<div style="left:648px;top:565.5px;width:12px;height:11.5px;background:#ffc000;"></div>
<span class="t f22" style="left:663.7px;top:562.4px;color:#000;transform:scaleX(0.898);">Revenue Breakeven level (Annual)</span>
<div style="left:136px;top:771px;width:53px;height:26.5px;background:#fff;"></div>
<span class="t f23" style="left:149.11px;top:779px;color:#000;transform:scaleX(0.954);">910</span>
<div style="left:227px;top:825px;width:53px;height:26.5px;background:#fff;"></div>
<span class="t f23" style="left:239.64px;top:833px;color:#000;transform:scaleX(0.954);">623</span>
<div style="left:117px;top:806px;width:91px;height:170.25px;background:#4ab2e6;"></div>
<div style="left:208px;top:860px;width:91px;height:116.25px;background:#ffc000;"></div>
<span class="t f24" style="left:183.02px;top:1025px;color:#000;transform:scaleX(0.868);">2026</span>
<div style="left:365.5px;top:717px;width:68px;height:26.5px;background:#fff;"></div>
<span class="t f23" style="left:377.03px;top:725px;color:#000;transform:scaleX(0.954);">1,200</span>
<div style="left:464px;top:811px;width:53px;height:26.5px;background:#fff;"></div>
<span class="t f23" style="left:476.64px;top:819px;color:#000;transform:scaleX(0.954);">700</span>
<div style="left:354px;top:752px;width:91px;height:224.25px;background:#4ab2e6;"></div>
<div style="left:445px;top:846px;width:91px;height:130.25px;background:#ffc000;"></div>
<span class="t f24" style="left:420.25px;top:1025px;color:#000;transform:scaleX(0.868);">2027</span>
<div style="left:601.5px;top:675px;width:68px;height:26.5px;background:#fff;"></div>
<span class="t f23" style="left:613.03px;top:683px;color:#000;transform:scaleX(0.954);">1,425</span>
<div style="left:700px;top:798px;width:53px;height:26.5px;background:#fff;"></div>
<span class="t f23" style="left:712.64px;top:806px;color:#000;transform:scaleX(0.954);">768</span>
<div style="left:590px;top:710px;width:91px;height:266.25px;background:#4ab2e6;"></div>
<div style="left:681px;top:833px;width:91px;height:143.25px;background:#ffc000;"></div>
<span class="t f24" style="left:656.62px;top:1025px;color:#000;transform:scaleX(0.868);">2028</span>
<div style="left:838.5px;top:633px;width:68px;height:26.5px;background:#fff;"></div>
<span class="t f23" style="left:850.03px;top:641px;color:#000;transform:scaleX(0.954);">1,651</span>
<div style="left:937px;top:784px;width:53px;height:26.5px;background:#fff;"></div>
<span class="t f23" style="left:949.64px;top:792px;color:#000;transform:scaleX(0.954);">843</span>
<div style="left:827px;top:668px;width:91px;height:308.25px;background:#4ab2e6;"></div>
<div style="left:918px;top:819px;width:91px;height:157.25px;background:#ffc000;"></div>
<span class="t f24" style="left:893.42px;top:1025px;color:#000;transform:scaleX(0.868);">2029</span>
<div style="left:1075.5px;top:589px;width:68px;height:26.5px;background:#fff;"></div>
<span class="t f23" style="left:1087.03px;top:597px;color:#000;transform:scaleX(0.954);">1,888</span>
<div style="left:1174px;top:772px;width:53px;height:26.5px;background:#fff;"></div>
<span class="t f23" style="left:1187.11px;top:780px;color:#000;transform:scaleX(0.954);">908</span>
<div style="left:1064px;top:624px;width:91px;height:352.25px;background:#4ab2e6;"></div>
<div style="left:1155px;top:807px;width:91px;height:169.25px;background:#ffc000;"></div>
<span class="t f24" style="left:1130.22px;top:1025px;color:#000;transform:scaleX(0.868);">2030</span>
<div style="left:89px;top:976px;width:1184px;height:1px;background:#5e9fca;"></div>
<div style="left:89px;top:976px;width:1px;height:6.5px;background:#5e9fca;"></div>
<div style="left:326px;top:976px;width:1px;height:6.5px;background:#5e9fca;"></div>
<div style="left:563px;top:976px;width:1px;height:6.5px;background:#5e9fca;"></div>
<div style="left:799px;top:976px;width:1px;height:6.5px;background:#5e9fca;"></div>
<div style="left:1036px;top:976px;width:1px;height:6.5px;background:#5e9fca;"></div>
<div style="left:1272px;top:976px;width:1px;height:6.5px;background:#5e9fca;"></div>
<div style="left:70px;top:1063px;width:1232px;height:34px;background:#4b4fd2;"></div>
<span class="t f21" style="left:481.2px;top:1068.5px;transform:scaleX(0.9);">Breakeven Calculation ($&#x27;000)</span>
<div style="left:71px;top:1101px;width:1230px;height:32px;background:#6e74e8;"></div>
<div style="left:685.25px;top:1101px;width:1.5px;height:32px;background:#fff;"></div>
<div style="left:808.75px;top:1101px;width:1.5px;height:32px;background:#fff;"></div>
<div style="left:931.75px;top:1101px;width:1.5px;height:32px;background:#fff;"></div>
<div style="left:1054.75px;top:1101px;width:1.5px;height:32px;background:#fff;"></div>
<div style="left:1177.75px;top:1101px;width:1.5px;height:32px;background:#fff;"></div>
<span class="t f25" style="left:81.11px;top:1109.2px;transform:scaleX(0.894);">Fiscal Year</span>
<span class="t f19" style="left:725.87px;top:1110px;transform:scaleX(0.9);">2026</span>
<span class="t f19" style="left:849.57px;top:1110px;transform:scaleX(0.9);">2027</span>
<span class="t f19" style="left:972.12px;top:1110px;transform:scaleX(0.9);">2028</span>
<span class="t f19" style="left:1095.12px;top:1110px;transform:scaleX(0.9);">2029</span>
<span class="t f19" style="left:1217.87px;top:1110px;transform:scaleX(0.9);">2030</span>
<div style="left:71.2px;top:1138.25px;width:1229.8px;height:26.35px;background:#4ab2e6;"></div>
<span class="t f26" style="left:74.68px;top:1142.8px;transform:scaleX(0.919);">Revenue Breakeven level (Annual)</span>
<span class="t f19" style="left:765.66px;top:1144.1px;transform:scaleX(0.9);">623</span>
<span class="t f19" style="left:888.36px;top:1144.1px;transform:scaleX(0.9);">700</span>
<span class="t f19" style="left:1011.46px;top:1144.1px;transform:scaleX(0.9);">768</span>
<span class="t f19" style="left:1135.26px;top:1144.1px;transform:scaleX(0.9);">843</span>
<span class="t f19" style="left:1257.36px;top:1144.1px;transform:scaleX(0.9);">908</span>
<div style="left:70px;top:1164.6px;width:1232px;height:1.6px;background:#d6effb;"></div>
<div style="left:70px;top:1166.2px;width:1232px;height:27.55px;background:#4ab2e6;"></div>
<span class="t f26" style="left:74.68px;top:1170.9px;transform:scaleX(0.916);">Revenue Breakeven level (Monthly)</span>
<span class="t f19" style="left:776.68px;top:1172.2px;transform:scaleX(0.9);">52</span>
<span class="t f19" style="left:899.38px;top:1172.2px;transform:scaleX(0.9);">58</span>
<span class="t f19" style="left:1022.48px;top:1172.2px;transform:scaleX(0.9);">64</span>
<span class="t f19" style="left:1145.38px;top:1172.2px;transform:scaleX(0.9);">70</span>
<span class="t f19" style="left:1268.38px;top:1172.2px;transform:scaleX(0.9);">76</span>
<span class="t f27" style="left:90.41px;top:1217.25px;color:#000;transform:scaleX(0.885);">Revenue</span>
<span class="t f27" style="left:768.25px;top:1217.25px;color:#000;transform:scaleX(0.9);">910</span>
<span class="t f27" style="left:876.74px;top:1217.25px;color:#000;transform:scaleX(0.9);">1,200</span>
<span class="t f27" style="left:1000.74px;top:1217.25px;color:#000;transform:scaleX(0.9);">1,425</span>
<span class="t f27" style="left:1123.64px;top:1217.25px;color:#000;transform:scaleX(0.9);">1,651</span>
<span class="t f27" style="left:1246.64px;top:1217.25px;color:#000;transform:scaleX(0.9);">1,888</span>
<span class="t f27" style="left:91.3px;top:1238.5px;color:#000;transform:scaleX(0.885);">COGS</span>
<span class="t f27" style="left:761.29px;top:1238.5px;color:#000;transform:scaleX(0.954);">(127)</span>
<span class="t f27" style="left:884.89px;top:1238.5px;color:#000;transform:scaleX(0.954);">(164)</span>
<span class="t f27" style="left:1007.99px;top:1238.5px;color:#000;transform:scaleX(0.954);">(190)</span>
<span class="t f27" style="left:1130.89px;top:1238.5px;color:#000;transform:scaleX(0.954);">(213)</span>
<span class="t f27" style="left:1253.89px;top:1238.5px;color:#000;transform:scaleX(0.954);">(236)</span>
<div style="left:70px;top:1257px;width:1232px;height:28.75px;background:#4ab2e6;"></div>
<span class="t f26" style="left:75.6px;top:1262.5px;transform:scaleX(0.899);">Gross Margin</span>
<span class="t f19" style="left:765.66px;top:1263.8px;transform:scaleX(0.9);">783</span>
<span class="t f19" style="left:871.33px;top:1263.8px;transform:scaleX(0.9);">1,036</span>
<span class="t f19" style="left:994.43px;top:1263.8px;transform:scaleX(0.9);">1,236</span>
<span class="t f19" style="left:1117.33px;top:1263.8px;transform:scaleX(0.9);">1,438</span>
<span class="t f19" style="left:1241.23px;top:1263.8px;transform:scaleX(0.9);">1,652</span>
<span class="t f28" style="left:75.8px;top:1292.1px;color:#1a1a1a;transform:scaleX(0.929);">Gross Margin %</span>
<span class="t f28" style="left:744.64px;top:1291.6px;color:#1a1a1a;transform:scaleX(0.981);">86.0%</span>
<span class="t f28" style="left:868.24px;top:1291.6px;color:#1a1a1a;transform:scaleX(0.981);">86.3%</span>
<span class="t f28" style="left:991.34px;top:1291.6px;color:#1a1a1a;transform:scaleX(0.981);">86.7%</span>
<span class="t f28" style="left:1114.24px;top:1291.6px;color:#1a1a1a;transform:scaleX(0.981);">87.1%</span>
<span class="t f28" style="left:1237.24px;top:1291.6px;color:#1a1a1a;transform:scaleX(0.981);">87.5%</span>
<span class="t f27" style="left:91.3px;top:1316.75px;color:#000;transform:scaleX(0.877);">Variable Expenses</span>
<span class="t f27" style="left:771.97px;top:1316.75px;color:#000;transform:scaleX(0.954);">(50)</span>
<span class="t f27" style="left:895.57px;top:1316.75px;color:#000;transform:scaleX(0.954);">(64)</span>
<span class="t f27" style="left:1018.67px;top:1316.75px;color:#000;transform:scaleX(0.954);">(71)</span>
<span class="t f27" style="left:1141.57px;top:1316.75px;color:#000;transform:scaleX(0.954);">(79)</span>
<span class="t f27" style="left:1264.57px;top:1316.75px;color:#000;transform:scaleX(0.954);">(85)</span>
<div style="left:70px;top:1335px;width:1232px;height:28.75px;background:#4ab2e6;"></div>
<span class="t f26" style="left:75.6px;top:1340.8px;transform:scaleX(0.902);">Contribution Margin</span>
<span class="t f19" style="left:765.66px;top:1342.1px;transform:scaleX(0.9);">733</span>
<span class="t f19" style="left:889.26px;top:1342.1px;transform:scaleX(0.9);">972</span>
<span class="t f19" style="left:994.43px;top:1342.1px;transform:scaleX(0.9);">1,164</span>
<span class="t f19" style="left:1117.33px;top:1342.1px;transform:scaleX(0.9);">1,359</span>
<span class="t f19" style="left:1241.23px;top:1342.1px;transform:scaleX(0.9);">1,567</span>
<span class="t f28" style="left:75.8px;top:1370.2px;color:#1a1a1a;transform:scaleX(0.926);">Contribution Margin %</span>
<span class="t f28" style="left:744.64px;top:1369.7px;color:#1a1a1a;transform:scaleX(0.981);">80.5%</span>
<span class="t f28" style="left:868.24px;top:1369.7px;color:#1a1a1a;transform:scaleX(0.981);">81.0%</span>
<span class="t f28" style="left:991.34px;top:1369.7px;color:#1a1a1a;transform:scaleX(0.981);">81.7%</span>
<span class="t f28" style="left:1114.24px;top:1369.7px;color:#1a1a1a;transform:scaleX(0.981);">82.3%</span>
<span class="t f28" style="left:1237.24px;top:1369.7px;color:#1a1a1a;transform:scaleX(0.981);">83.0%</span>
<span class="t f27" style="left:90.41px;top:1394.75px;color:#000;transform:scaleX(0.89);">Payroll Expenses</span>
<span class="t f27" style="left:761.29px;top:1394.75px;color:#000;transform:scaleX(0.954);">(382)</span>
<span class="t f27" style="left:884.89px;top:1394.75px;color:#000;transform:scaleX(0.954);">(445)</span>
<span class="t f27" style="left:1007.99px;top:1394.75px;color:#000;transform:scaleX(0.954);">(509)</span>
<span class="t f27" style="left:1130.89px;top:1394.75px;color:#000;transform:scaleX(0.954);">(579)</span>
<span class="t f27" style="left:1253.89px;top:1394.75px;color:#000;transform:scaleX(0.954);">(642)</span>
<span class="t f27" style="left:90.41px;top:1416.5px;color:#000;transform:scaleX(0.892);">Fixed Expenses</span>
<span class="t f27" style="left:771.97px;top:1416.5px;color:#000;transform:scaleX(0.954);">(89)</span>
<span class="t f27" style="left:895.57px;top:1416.5px;color:#000;transform:scaleX(0.954);">(89)</span>
<span class="t f27" style="left:1018.67px;top:1416.5px;color:#000;transform:scaleX(0.954);">(89)</span>
<span class="t f27" style="left:1141.57px;top:1416.5px;color:#000;transform:scaleX(0.954);">(89)</span>
<span class="t f27" style="left:1264.57px;top:1416.5px;color:#000;transform:scaleX(0.954);">(89)</span>
<div style="left:70px;top:1435px;width:1232px;height:26px;background:#4ab2e6;"></div>
<span class="t f26" style="left:74.66px;top:1439.4px;transform:scaleX(0.942);">EBITDA</span>
<span class="t f19" style="left:764.76px;top:1440.7px;transform:scaleX(0.9);">261</span>
<span class="t f19" style="left:889.26px;top:1440.7px;transform:scaleX(0.9);">437</span>
<span class="t f19" style="left:1011.46px;top:1440.7px;transform:scaleX(0.9);">566</span>
<span class="t f19" style="left:1134.36px;top:1440.7px;transform:scaleX(0.9);">691</span>
<span class="t f19" style="left:1257.36px;top:1440.7px;transform:scaleX(0.9);">836</span>
<span class="t f28" style="left:75.8px;top:1466.75px;color:#1a1a1a;transform:scaleX(0.996);">EBITDA %</span>
<span class="t f28" style="left:744.64px;top:1466.25px;color:#1a1a1a;transform:scaleX(0.981);">28.7%</span>
<span class="t f28" style="left:868.24px;top:1466.25px;color:#1a1a1a;transform:scaleX(0.981);">36.5%</span>
<span class="t f28" style="left:991.34px;top:1466.25px;color:#1a1a1a;transform:scaleX(0.981);">39.7%</span>
<span class="t f28" style="left:1114.24px;top:1466.25px;color:#1a1a1a;transform:scaleX(0.981);">41.8%</span>
<span class="t f28" style="left:1237.24px;top:1466.25px;color:#1a1a1a;transform:scaleX(0.981);">44.3%</span>
<span class="t f27" style="left:90.42px;top:1491.75px;color:#000;transform:scaleX(0.885);">Depreciation &amp; Amortization</span>
<span class="t f27" style="left:771.97px;top:1491.75px;color:#000;transform:scaleX(0.954);">(12)</span>
<span class="t f27" style="left:895.57px;top:1491.75px;color:#000;transform:scaleX(0.954);">(15)</span>
<span class="t f27" style="left:1018.67px;top:1491.75px;color:#000;transform:scaleX(0.954);">(15)</span>
<span class="t f27" style="left:1141.57px;top:1491.75px;color:#000;transform:scaleX(0.954);">(15)</span>
<span class="t f27" style="left:1264.57px;top:1491.75px;color:#000;transform:scaleX(0.954);">(15)</span>
<span class="t f27" style="left:90.4px;top:1513.5px;color:#000;transform:scaleX(0.901);">Interest Expense</span>
<span class="t f27" style="left:771.97px;top:1513.5px;color:#000;transform:scaleX(0.954);">(18)</span>
<span class="t f27" style="left:895.57px;top:1513.5px;color:#000;transform:scaleX(0.954);">(17)</span>
<span class="t f27" style="left:1018.67px;top:1513.5px;color:#000;transform:scaleX(0.954);">(14)</span>
<span class="t f27" style="left:1141.57px;top:1513.5px;color:#000;transform:scaleX(0.954);">(11)</span>
<span class="t f27" style="left:1275.25px;top:1513.5px;color:#000;transform:scaleX(0.954);">(7)</span>
<div style="left:70px;top:1532.5px;width:1232px;height:28.25px;background:#4ab2e6;"></div>
<span class="t f26" style="left:74.69px;top:1537.2px;transform:scaleX(0.909);">Net Profit Before Tax</span>
<span class="t f19" style="left:764.76px;top:1538.5px;transform:scaleX(0.9);">231</span>
<span class="t f19" style="left:888.36px;top:1538.5px;transform:scaleX(0.9);">405</span>
<span class="t f19" style="left:1012.36px;top:1538.5px;transform:scaleX(0.9);">537</span>
<span class="t f19" style="left:1134.36px;top:1538.5px;transform:scaleX(0.9);">665</span>
<span class="t f19" style="left:1258.26px;top:1538.5px;transform:scaleX(0.9);">813</span>
<span class="t f28" style="left:75.8px;top:1567.2px;color:#1a1a1a;transform:scaleX(0.936);">Net Profit Before Tax %</span>
<span class="t f28" style="left:744.64px;top:1566.7px;color:#1a1a1a;transform:scaleX(0.981);">25.4%</span>
<span class="t f28" style="left:868.24px;top:1566.7px;color:#1a1a1a;transform:scaleX(0.981);">33.8%</span>
<span class="t f28" style="left:991.34px;top:1566.7px;color:#1a1a1a;transform:scaleX(0.981);">37.7%</span>
<span class="t f28" style="left:1114.24px;top:1566.7px;color:#1a1a1a;transform:scaleX(0.981);">40.3%</span>
<span class="t f28" style="left:1237.24px;top:1566.7px;color:#1a1a1a;transform:scaleX(0.981);">43.1%</span>
<span class="t f27" style="left:91.3px;top:1592px;color:#000;transform:scaleX(0.903);">Corporate Tax Expense</span>
<span class="t f27" style="left:771.97px;top:1592px;color:#000;transform:scaleX(0.954);">(58)</span>
<span class="t f27" style="left:884.89px;top:1592px;color:#000;transform:scaleX(0.954);">(101)</span>
<span class="t f27" style="left:1007.99px;top:1592px;color:#000;transform:scaleX(0.954);">(134)</span>
<span class="t f27" style="left:1130.89px;top:1592px;color:#000;transform:scaleX(0.954);">(166)</span>
<span class="t f27" style="left:1253.89px;top:1592px;color:#000;transform:scaleX(0.954);">(203)</span>
<div style="left:70px;top:1610px;width:1232px;height:28.5px;background:#4ab2e6;"></div>
<span class="t f26" style="left:74.69px;top:1615.2px;transform:scaleX(0.907);">Net Profit After Tax</span>
<span class="t f19" style="left:765.66px;top:1616.5px;transform:scaleX(0.9);">173</span>
<span class="t f19" style="left:888.36px;top:1616.5px;transform:scaleX(0.9);">304</span>
<span class="t f19" style="left:1012.36px;top:1616.5px;transform:scaleX(0.9);">403</span>
<span class="t f19" style="left:1134.36px;top:1616.5px;transform:scaleX(0.9);">499</span>
<span class="t f19" style="left:1257.36px;top:1616.5px;transform:scaleX(0.9);">610</span>
<span class="t f28" style="left:75.8px;top:1644.7px;color:#1a1a1a;transform:scaleX(0.933);">Net Profit After Tax %</span>
<span class="t f28" style="left:744.64px;top:1644.2px;color:#1a1a1a;transform:scaleX(0.981);">19.1%</span>
<span class="t f28" style="left:868.24px;top:1644.2px;color:#1a1a1a;transform:scaleX(0.981);">25.3%</span>
<span class="t f28" style="left:991.34px;top:1644.2px;color:#1a1a1a;transform:scaleX(0.981);">28.3%</span>
<span class="t f28" style="left:1114.24px;top:1644.2px;color:#1a1a1a;transform:scaleX(0.981);">30.2%</span>
<span class="t f28" style="left:1237.24px;top:1644.2px;color:#1a1a1a;transform:scaleX(0.981);">32.3%</span>
<div style="left:2860px;top:278px;width:30.5px;height:1392px;background:#121212;"></div>
<div style="left:2870.3px;top:304px;width:11.7px;height:1113px;background:#9a9a9a;border-radius:6px"></div>
<svg style="left:2866px;top:284px;" width="22" height="14" viewBox="0 0 22 14"><path d="M4 11.5L10.5 2.5L17 11.5Z" fill="#9a9a9a" stroke="#9a9a9a" stroke-width="1.5" stroke-linejoin="round"/></svg>
<svg style="left:2866px;top:1650px;" width="22" height="16" viewBox="0 0 22 16"><path d="M4 4.5L10.5 13.5L17 4.5Z" fill="#9a9a9a" stroke="#9a9a9a" stroke-width="1.5" stroke-linejoin="round"/></svg>
<div style="left:11px;top:1670px;width:2879.5px;height:48px;background:#0a0a0a;"></div>
<svg style="left:40px;top:1680px;" width="70" height="26" viewBox="0 0 70 26"><path d="M15.2 5.5L6.8 13L15.2 20.5" fill="none" stroke="#9c9c9c" stroke-width="1.6"/><path d="M55 5.5L63.4 13L55 20.5" fill="none" stroke="#d0d0d0" stroke-width="1.6"/></svg>
<span class="t f1" style="left:189.16px;top:1685.2px;transform:scaleX(1.042);">Contents</span>
<div style="left:298.8px;top:1675.8px;width:128.2px;height:36px;background:#fdee6b;border-radius:5px"></div>
<span class="t f1" style="left:312.76px;top:1685.4px;color:#1b1b1b;transform:scaleX(1.038);">Dashboard</span>
<div style="left:440px;top:1675.8px;width:105.8px;height:36px;background:#fdee6b;border-radius:5px"></div>
<span class="t f1" style="left:454.02px;top:1685.4px;color:#1b1b1b;transform:scaleX(0.982);">Revenue</span>
<div style="left:559.2px;top:1675.8px;width:157.6px;height:36px;background:#fdee6b;border-radius:5px"></div>
<span class="t f1" style="left:571.64px;top:1685.4px;color:#1b1b1b;transform:scaleX(0.962);">COGS &amp; OPEX</span>
<div style="left:730px;top:1675.8px;width:89.2px;height:36px;background:#fdee6b;border-radius:5px"></div>
<span class="t f1" style="left:742.77px;top:1685.4px;color:#1b1b1b;transform:scaleX(1.025);">Payroll</span>
<div style="left:832px;top:1675.8px;width:87.2px;height:36px;background:#fdee6b;border-radius:5px"></div>
<span class="t f1" style="left:844.7px;top:1685.4px;color:#1b1b1b;transform:scaleX(0.901);">CAPEX</span>
<div style="left:932px;top:1675.8px;width:113px;height:36px;background:#fdee6b;border-radius:5px"></div>
<span class="t f1" style="left:944.58px;top:1685.4px;color:#1b1b1b;transform:scaleX(1.018);">CapTable</span>
<div style="left:1058px;top:1675.8px;width:90px;height:36px;background:#fdee6b;border-radius:5px"></div>
<span class="t f1" style="left:1070.46px;top:1685.4px;color:#1b1b1b;transform:scaleX(1.036);">Capital</span>
<div style="left:1160.8px;top:1675.8px;width:42.2px;height:36px;background:#4db3e8;border-radius:5px"></div>
<span class="t f1" style="left:1174.36px;top:1685.4px;color:#1b1b1b;transform:scaleX(0.843);">IS</span>
<div style="left:1215.8px;top:1675.8px;width:48.4px;height:36px;background:#4db3e8;border-radius:5px"></div>
<span class="t f1" style="left:1228.73px;top:1685.4px;color:#1b1b1b;transform:scaleX(0.873);">CF</span>
<div style="left:1277px;top:1675.8px;width:48px;height:36px;background:#4db3e8;border-radius:5px"></div>
<span class="t f1" style="left:1289.74px;top:1685.4px;color:#1b1b1b;transform:scaleX(0.864);">BS</span>
<div style="left:1338px;top:1675.8px;width:115px;height:36px;background:#4db3e8;border-radius:5px"></div>
<span class="t f1" style="left:1351.3px;top:1685.4px;color:#1b1b1b;transform:scaleX(0.984);">Scenarios</span>
<div style="left:1465.8px;top:1675.8px;width:115.4px;height:36px;background:#4db3e8;border-radius:5px"></div>
<span class="t f1" style="left:1479.6px;top:1685.4px;color:#1b1b1b;transform:scaleX(1.079);">Valuation</span>
<div style="left:1594.2px;top:1675.8px;width:113.8px;height:36px;background:#4db3e8;border-radius:5px"></div>
<span class="t f1" style="left:1608.3px;top:1685.4px;color:#1b1b1b;transform:scaleX(1.013);">Summary</span>
<div style="left:1782px;top:1675.8px;width:72.2px;height:36px;background:#4db3e8;border-radius:5px"></div>
<span class="t f1" style="left:1794.87px;top:1685.4px;color:#1b1b1b;transform:scaleX(0.935);">ROIC</span>
<div style="left:1867px;top:1675.8px;width:85px;height:36px;background:#4db3e8;border-radius:5px"></div>
<span class="t f1" style="left:1879.61px;top:1685.4px;color:#1b1b1b;transform:scaleX(0.995);">Charts</span>
<div style="left:1965px;top:1675.8px;width:64.2px;height:36px;background:#4db3e8;border-radius:5px"></div>
<span class="t f1" style="left:1977.9px;top:1685.4px;color:#1b1b1b;transform:scaleX(0.897);">KPIs</span>
<div style="left:2042px;top:1675.8px;width:29.8px;height:36px;background:#4db3e8;border-radius:5px 0 0 5px;overflow:hidden"><span class="t" style="left:12.6px;top:7.5px;font:400 20px 'Liberation Sans',sans-serif;line-height:1;color:#1b1b1b">Sc</span></div>
<div style="left:292px;top:1680px;width:1px;height:28px;background:#666;"></div>
<div style="left:433.3px;top:1680px;width:1px;height:28px;background:#666;"></div>
<div style="left:552px;top:1680px;width:1px;height:28px;background:#666;"></div>
<div style="left:723.3px;top:1680px;width:1px;height:28px;background:#666;"></div>
<div style="left:825px;top:1680px;width:1px;height:28px;background:#666;"></div>
<div style="left:925.3px;top:1680px;width:1px;height:28px;background:#666;"></div>
<div style="left:1051.3px;top:1680px;width:1px;height:28px;background:#666;"></div>
<div style="left:1154px;top:1680px;width:1px;height:28px;background:#666;"></div>
<div style="left:1208.7px;top:1680px;width:1px;height:28px;background:#666;"></div>
<div style="left:1270px;top:1680px;width:1px;height:28px;background:#666;"></div>
<div style="left:1331px;top:1680px;width:1px;height:28px;background:#666;"></div>
<div style="left:1459px;top:1680px;width:1px;height:28px;background:#666;"></div>
<div style="left:1587px;top:1680px;width:1px;height:28px;background:#666;"></div>
<div style="left:1714px;top:1680px;width:1px;height:28px;background:#666;"></div>
<div style="left:1775px;top:1680px;width:1px;height:28px;background:#666;"></div>
<div style="left:1860.3px;top:1680px;width:1px;height:28px;background:#666;"></div>
<div style="left:1958.3px;top:1680px;width:1px;height:28px;background:#666;"></div>
<div style="left:2035.3px;top:1680px;width:1px;height:28px;background:#666;"></div>
<div style="left:1720.8px;top:1670px;width:48px;height:41.8px;background:linear-gradient(#ffffff 0%,#ffffff 35%,#cfe6f7 100%);border-radius:0 0 7px 7px"></div>
<svg style="left:1714px;top:1670px;" width="7" height="7" viewBox="0 0 7 7"><path d="M0 0H7V7A7 7 0 0 0 0 0Z" fill="#fff"/></svg>
<svg style="left:1768.7px;top:1670px;" width="7" height="7" viewBox="0 0 7 7"><path d="M7 0H0V7A7 7 0 0 1 7 0Z" fill="#fff"/></svg>
<span class="t f1" style="left:1732.92px;top:1680.4px;color:#1b1b1b;transform:scaleX(0.884);">BE</span>
<div style="left:1733px;top:1705.5px;width:24px;height:2.5px;background:#1e8a4c;"></div>
<svg style="left:2085px;top:1680px;" width="120" height="26" viewBox="0 0 120 26"><circle cx="4.3" cy="13" r="2.1" fill="#e0e0e0"/><circle cx="10.4" cy="13" r="2.1" fill="#e0e0e0"/><circle cx="16.5" cy="13" r="2.1" fill="#e0e0e0"/><path d="M50 13.5H67M58.5 5V22" stroke="#e6e6e6" stroke-width="1.5"/><rect x="105.4" y="6.4" width="3.2" height="3.2" fill="#e0e0e0"/><rect x="105.4" y="13" width="3.2" height="3.2" fill="#e0e0e0"/><rect x="105.4" y="19.6" width="3.2" height="3.2" fill="#e0e0e0"/></svg>
<div style="left:2216px;top:1680px;width:643.5px;height:26px;background:#141414;border-radius:13px"></div>
<div style="left:2241.2px;top:1687.2px;width:574.8px;height:12px;background:#9a9a9a;border-radius:6px"></div>
<svg style="left:2222px;top:1684px;" width="16" height="18" viewBox="0 0 16 18"><path d="M11.5 2.8L2.8 9.3L11.5 15.8Z" fill="#9a9a9a" stroke="#9a9a9a" stroke-width="1.4" stroke-linejoin="round"/></svg>
<svg style="left:2838px;top:1684px;" width="16" height="18" viewBox="0 0 16 18"><path d="M4.5 2.8L13.2 9.3L4.5 15.8Z" fill="#9a9a9a" stroke="#9a9a9a" stroke-width="1.4" stroke-linejoin="round"/></svg>
<div style="left:11px;top:1718px;width:2879.5px;height:33px;background:#121212;border-top:1px solid #2c2c2c"></div>
<span class="t f29" style="left:26.27px;top:1728px;transform:scaleX(0.933);">Ready</span>
<span class="t f30" style="left:173.2px;top:1728px;transform:scaleX(0.981);">Accessibility: Investigate</span>
<svg style="left:96px;top:1720px;" width="80" height="30" viewBox="0 0 80 30"><path d="M4 4.2H25M4 8.2H25M4.8 4.2V23H11.5M24.2 4.2V9.5" fill="none" stroke="#e6e6e6" stroke-width="1.5"/><path d="M7.5 12.6H12M7.5 16.2H11M7.5 19.8H11" stroke="#e6e6e6" stroke-width="1.4"/><circle cx="18.3" cy="18" r="6.6" fill="none" stroke="#e6e6e6" stroke-width="1.5"/><circle cx="18.3" cy="18" r="3" fill="#e6e6e6"/><circle cx="59.6" cy="6.6" r="2.5" fill="none" stroke="#e6e6e6" stroke-width="1.4"/><path d="M51.5 9.5C55 12.5 64 12.5 68 9.5M56.6 12V18L54 26M62.6 12V17.5L63.6 20" fill="none" stroke="#e6e6e6" stroke-width="1.5" stroke-linecap="round"/><path d="M61.5 19.8L70.5 28M70.5 19.8L61.5 28" stroke="#e6e6e6" stroke-width="1.5"/></svg>
<div style="left:2445px;top:1719px;width:60px;height:32px;background:#262626;"></div>
<svg style="left:2460px;top:1720px;" width="150" height="30" viewBox="0 0 150 30"><rect x="4.8" y="4.8" width="18.6" height="18.6" fill="none" stroke="#f0f0f0" stroke-width="1.6"/><path d="M11 4.8V23.4M17.2 4.8V23.4M4.8 11V11H23.4M4.8 17.2H23.4" stroke="#f0f0f0" stroke-width="1.5" fill="none"/><rect x="64.8" y="4.8" width="20.4" height="18.6" fill="none" stroke="#f0f0f0" stroke-width="1.6"/><rect x="69.6" y="8.6" width="10.8" height="11" fill="none" stroke="#f0f0f0" stroke-width="1.3"/><path d="M72 12H78M72 14.6H78M72 17.2H78" stroke="#f0f0f0" stroke-width="1.1"/><rect x="124.8" y="4.8" width="20.4" height="18.6" fill="none" stroke="#f0f0f0" stroke-width="1.6"/><path d="M130.6 4.8V14.5M136.8 4.8V14.5M124.8 14.5H136.8" stroke="#f0f0f0" stroke-width="1.5" fill="none"/></svg>
<div style="left:2633px;top:1734px;width:12px;height:1.4px;background:#e0e0e0;"></div>
<div style="left:2653px;top:1734px;width:148px;height:1.6px;background:#b8b8b8;"></div>
<div style="left:2726px;top:1726px;width:8px;height:17px;background:#c4c4c4;"></div>
<div style="left:2809px;top:1734px;width:11.6px;height:1.4px;background:#e6e6e6;"></div>
<div style="left:2814.1px;top:1729px;width:1.4px;height:11.6px;background:#e6e6e6;"></div>
<span class="t f29" style="left:2839.6px;top:1728px;">110%</span>
</div></body></html>
